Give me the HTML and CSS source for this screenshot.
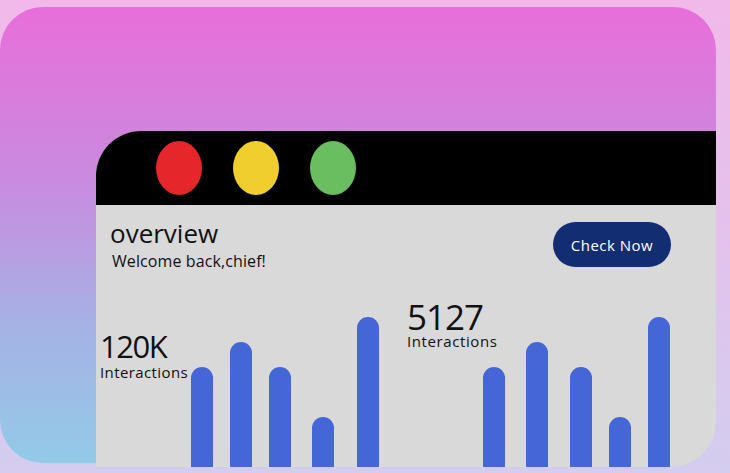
FILE: index.html
```html
<!DOCTYPE html>
<html lang="en">
<head>
<meta charset="utf-8">
<title>Overview</title>
<link rel="stylesheet" href="styles.css">
</head>
<body>
<div class="card">
  <div class="window">
    <div class="titlebar">
      <span class="light red"></span>
      <span class="light yellow"></span>
      <span class="light green"></span>
    </div>
    <div class="content">
      <div class="top">
        <div class="heading">
          <h1 class="title">overview</h1>
          <p class="welcome">Welcome back,chief!</p>
        </div>
        <button class="cta">Check Now</button>
      </div>
      <div class="charts">
        <div class="panel panel-a">
          <div class="stat stat-a">
            <div class="value value-a">120K</div>
            <div class="label">Interactions</div>
          </div>
          <div class="bars bars-a">
            <span class="bar" style="height:100px"></span>
            <span class="bar" style="height:125px"></span>
            <span class="bar" style="height:100px"></span>
            <span class="bar" style="height:50px"></span>
            <span class="bar" style="height:150px"></span>
          </div>
        </div>
        <div class="panel panel-b">
          <div class="stat stat-b">
            <div class="value value-b">5127</div>
            <div class="label">Interactions</div>
          </div>
          <div class="bars bars-b">
            <span class="bar" style="height:100px"></span>
            <span class="bar" style="height:125px"></span>
            <span class="bar" style="height:100px"></span>
            <span class="bar" style="height:50px"></span>
            <span class="bar" style="height:150px"></span>
          </div>
        </div>
      </div>
    </div>
  </div>
</div>
</body>
</html>
```

FILE: styles.css
```css
* { box-sizing: border-box; }

html, body {
  margin: 0;
  padding: 0;
}

body {
  width: 730px;
  height: 473px;
  overflow: hidden;
  background: linear-gradient(180deg, #f1b9ea 0%, #e3c2ec 50%, #d3cdef 100%);
  font-family: "Open Sans", "Liberation Sans", sans-serif;
  color: #111;
  padding-top: 7px;
}

.card {
  width: 716px;
  height: 456px;
  border-radius: 43px;
  background: linear-gradient(180deg, #e86ed9 0%, #c98be0 38%, #a7b0e4 68%, #93cae8 100%);
  padding-top: 124px;
  padding-left: 96px;
}

.window {
  width: 620px;
  height: 336px;
  border-radius: 45px 0 45px 0;
  overflow: hidden;
  background: #d9d9d9;
  display: flex;
  flex-direction: column;
}

.titlebar {
  height: 74px;
  background: #000;
  display: flex;
  align-items: center;
  gap: 31px;
  padding-left: 60px;
}

.light {
  width: 46px;
  height: 54px;
  border-radius: 50%;
}
.red { background: #e5262a; }
.yellow { background: #efce2e; }
.green { background: #6abe5f; }

.content {
  flex: 1;
  display: flex;
  flex-direction: column;
}

.top {
  height: 75px;
  display: flex;
  justify-content: space-between;
  align-items: flex-start;
  padding: 13px 45px 0 14px;
}

.title {
  margin: 0;
  font-size: 26px;
  line-height: 31px;
  font-weight: 400;
  color: #111;
}

.welcome {
  margin: 2px 0 0 2px;
  font-size: 16px;
  line-height: 20px;
  letter-spacing: 0.1px;
  color: #111;
}

.cta {
  margin-top: 4px;
  width: 118px;
  height: 45px;
  border: none;
  border-radius: 23px;
  background: #132d73;
  color: #fff;
  font-family: inherit;
  font-size: 15px;
  letter-spacing: 0.5px;
  padding: 0;
}

.charts {
  flex: 1;
  display: flex;
  padding-left: 4px;
}

.panel {
  display: flex;
  align-items: flex-end;
}

.panel-a { width: 307px; }
.panel-b { flex: 1; }

.stat {
  align-self: flex-start;
  white-space: nowrap;
}
.stat-a { width: 91px; margin-top: 51px; }
.stat-b { width: 76px; margin-top: 20px; }

.value {
  font-weight: 400;
  color: #111;
}
.value-a { font-size: 31px; line-height: 31px; letter-spacing: -1.5px; }
.value-b { font-size: 35px; line-height: 34px; letter-spacing: -1px; }

.label {
  font-size: 15px;
  line-height: 15px;
  margin-top: 3px;
  letter-spacing: 0.4px;
  color: #111;
}
.stat-b .label { margin-top: 0; letter-spacing: 0.6px; }

.bars {
  display: flex;
  align-items: flex-end;
}

.bar {
  display: block;
  width: 22px;
  border-radius: 11px 11px 0 0;
  background: #4466d6;
}

.bars-a .bar:nth-child(2) { margin-left: 17px; }
.bars-a .bar:nth-child(3) { margin-left: 17px; }
.bars-a .bar:nth-child(4) { margin-left: 21px; }
.bars-a .bar:nth-child(5) { margin-left: 23px; }

.bars-b .bar:nth-child(2) { margin-left: 21px; }
.bars-b .bar:nth-child(3) { margin-left: 22px; }
.bars-b .bar:nth-child(4) { margin-left: 17px; }
.bars-b .bar:nth-child(5) { margin-left: 17px; }
```
